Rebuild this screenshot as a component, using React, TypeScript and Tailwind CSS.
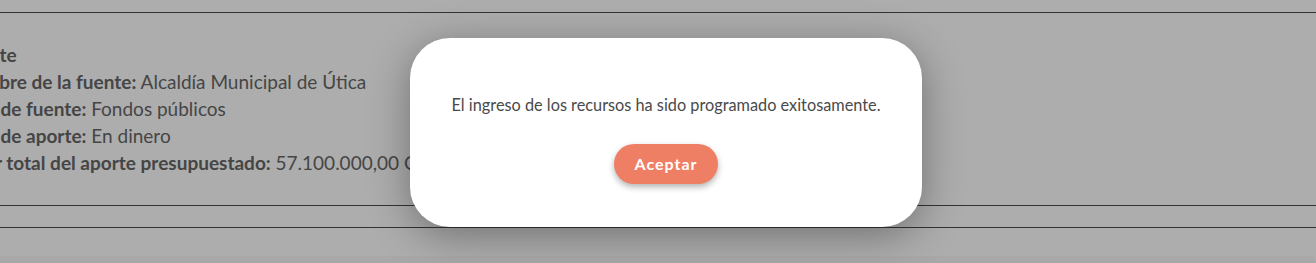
import React from "react";

export default function App() {
  const font = { fontFamily: "Lato, 'Open Sans', sans-serif" };
  return (
    <div className="relative w-full h-[263px] overflow-hidden bg-[#adadad]" style={font}>
      <div className="h-3" />
      <div className="border-t border-[#333333]" />
      <div className="pt-[28px] pb-[29px] ml-[-42px] text-[19px] leading-[27px] text-[#454545] whitespace-nowrap">
        <div className="font-bold">Fuente</div>
        <div>
          <span className="font-bold">Nombre de la fuente:</span> Alcaldía Municipal de Útica
        </div>
        <div>
          <span className="font-bold">Tipo de fuente:</span> Fondos públicos
        </div>
        <div>
          <span className="font-bold">Tipo de aporte:</span> En dinero
        </div>
        <div>
          <span className="font-bold">Valor total del aporte presupuestado:</span> 57.100.000,00 COP
        </div>
      </div>
      <div className="border-t border-[#333333]" />
      <div className="h-[21px]" />
      <div className="border-t border-[#333333]" />
      <div className="h-[28px]" />
      <div className="h-4 bg-[#a8a8a8] rounded-tr-md" />

      <div className="absolute left-[410px] top-[38px] w-[512px] h-[189px] rounded-[40px] bg-white shadow-[0_8px_40px_rgba(0,0,0,0.35)] flex flex-col items-center">
        <p className="mt-[56px] text-[16.3px] leading-[22px] text-[#4a4a4a] whitespace-nowrap">
          El ingreso de los recursos ha sido programado exitosamente.
        </p>
        <button className="mt-[28px] w-[104px] h-[40px] rounded-full bg-[#ef7f64] text-white font-bold text-[16px] tracking-[1px] shadow-[0_3px_6px_rgba(0,0,0,0.3)]">
          Aceptar
        </button>
      </div>
    </div>
  );
}
